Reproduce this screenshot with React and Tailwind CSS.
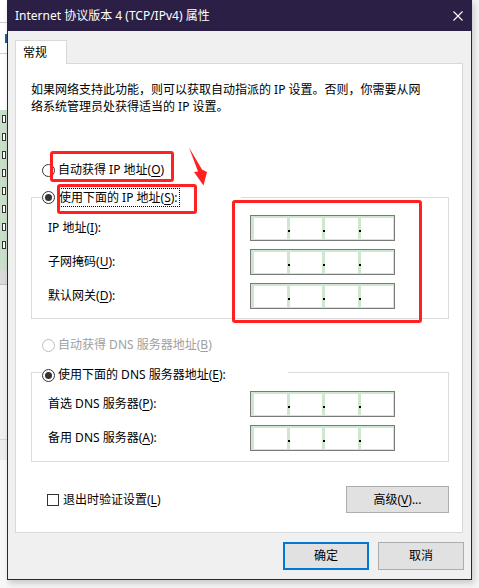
import React from "react";

const font = {
  fontFamily: '"Microsoft YaHei UI", "Noto Sans", "Noto Sans CJK SC", sans-serif',
};

function Radio({ checked, disabled }) {
  return (
    <span
      className={`w-[13px] h-[13px] rounded-full border bg-white flex items-center justify-center shrink-0 ${
        disabled ? "border-[#bcbcbc]" : "border-[#333333]"
      }`}
    >
      {checked && <span className="w-[7px] h-[7px] rounded-full bg-[#333333]" />}
    </span>
  );
}

function IpBox() {
  const cells = [0, 1, 2, 3];
  return (
    <div className="w-[145px] h-[26px] border border-[#7a7a7a] bg-[#cde8cf] flex pt-[2px] pb-[1px] pl-[3px] pr-[1px]">
      {cells.map((c) => (
        <React.Fragment key={c}>
          <div className="flex-1 bg-white" />
          {c < 3 && (
            <div className="w-[3px] relative">
              <span className="absolute left-[1px] top-[12px] w-[2px] h-[2px] bg-black" />
            </div>
          )}
        </React.Fragment>
      ))}
    </div>
  );
}

function FieldRow({ label, hotkey, after }) {
  return (
    <div className="flex items-center h-[26px]">
      <div className="w-[202px] text-[12px] text-black whitespace-nowrap">
        {label}
        (<u className="underline-offset-2">{hotkey}</u>){after || ":"}
      </div>
      <IpBox />
    </div>
  );
}

function LeftStrip() {
  const ticks = [0, 1, 2, 3, 4, 5, 6, 7];
  return (
    <div className="w-[7px] h-[588px] flex flex-col overflow-hidden">
      <div className="h-[22px] bg-white" />
      <div className="h-px bg-[#cfcfcf]" />
      <div className="h-[30px] bg-white flex flex-col justify-center items-end">
        <span className="w-[2px] h-[9px] bg-[#2c5d8c]" />
      </div>
      <div className="h-px bg-[#cfcfcf]" />
      <div className="h-[56px] bg-white" />
      <div className="h-[160px] bg-[#cadfca] flex flex-col pt-[5px] gap-[10px] items-end pr-[1px]">
        {ticks.map((t) => (
          <span key={t} className="w-[4px] h-[8px] border border-[#333] bg-white" />
        ))}
      </div>
      <div className="h-[15px] bg-[#dadada] border-b border-[#c0c0c0]" />
      <div className="h-[155px] bg-[#f0f0f0] border-b border-[#d6d6d6]" />
      <div className="h-[20px] bg-[#ececec]" />
      <div className="flex-1 bg-[#f7f7f7]" />
    </div>
  );
}

export default function App() {
  return (
    <div className="w-[479px] h-[588px] bg-[#f4f4f4] relative overflow-hidden" style={font}>
      <div className="flex">
        <LeftStrip />
        <div className="w-[465px] h-[580px] border-x border-b border-[#2c2343] flex flex-col bg-[#f0f0f0] shadow-[2px_3px_6px_rgba(0,0,0,0.18)]">
          {/* title bar */}
          <div className="h-[31px] bg-[#2c1f45] flex items-center justify-between pl-[8px] pr-[9px] -mx-px">
            <span className="text-white text-[12px] leading-none">
              Internet 协议版本 4 (TCP/IPv4) 属性
            </span>
            <svg width="10" height="10" viewBox="0 0 10 10">
              <path d="M0.5 0.5 L9.5 9.5 M9.5 0.5 L0.5 9.5" stroke="#ffffff" strokeWidth="1.1" />
            </svg>
          </div>

          {/* body */}
          <div className="flex flex-col pt-[9px] pl-[7px] pr-[8px]">
            <div className="w-[52px] h-[24px] bg-white border-x border-t border-[#d9d9d9] pl-[7px] flex items-center text-[12px] text-black relative z-10">
              常规
            </div>
            <div className="h-[470px] -mt-px bg-white border border-[#d9d9d9] pl-[15px] pr-[13px] pt-[17px] flex flex-col text-[12px] text-black">
              <p className="leading-[17px] whitespace-nowrap">
                如果网络支持此功能，则可以获取自动指派的 IP 设置。否则，你需要从网
                <br />
                络系统管理员处获得适当的 IP 设置。
              </p>

              <div className="mt-[45px] h-[20px] flex items-center pl-[11px] gap-[3px]">
                <Radio />
                <span>
                  自动获得 IP 地址(<u className="underline-offset-2">O</u>)
                </span>
              </div>

              {/* group 1 */}
              <div className="mt-[17px] border border-[#dcdcdc] pl-[16px] pb-[9px]">
                <div className="-mt-[11px] -ml-[6px] w-[199px] h-[20px] bg-white flex items-center gap-[2px]">
                  <Radio checked />
                  <span className="border border-dotted border-black px-[1px] leading-[17px]">
                    使用下面的 IP 地址(<u className="underline-offset-2">S</u>):
                  </span>
                </div>
                <div className="mt-[8px] flex flex-col gap-[8px]">
                  <FieldRow label="IP 地址" hotkey="I" />
                  <FieldRow label="子网掩码" hotkey="U" />
                  <FieldRow label="默认网关" hotkey="D" />
                </div>
              </div>

              <div className="mt-[16px] h-[20px] flex items-center pl-[11px] gap-[3px] text-[#a0a0a0]">
                <Radio disabled />
                <span>
                  自动获得 DNS 服务器地址(<u className="underline-offset-2">B</u>)
                </span>
              </div>

              {/* group 2 */}
              <div className="mt-[17px] border border-[#dcdcdc] pl-[16px] pb-[10px]">
                <div className="-mt-[8px] -ml-[6px] w-[246px] h-[20px] bg-white flex items-center gap-[3px]">
                  <Radio checked />
                  <span>
                    使用下面的 DNS 服务器地址(<u className="underline-offset-2">E</u>):
                  </span>
                </div>
                <div className="mt-[6px] flex flex-col gap-[8px]">
                  <FieldRow label="首选 DNS 服务器" hotkey="P" />
                  <FieldRow label="备用 DNS 服务器" hotkey="A" />
                </div>
              </div>

              <div className="mt-[24px] flex items-center justify-between">
                <div className="flex items-center gap-[4px] pl-[16px]">
                  <span className="w-[12px] h-[12px] border border-[#333333] bg-white" />
                  <span>
                    退出时验证设置(<u className="underline-offset-2">L</u>)
                  </span>
                </div>
                <button className="w-[103px] h-[27px] bg-[#e1e1e1] border border-[#adadad] text-[12px] text-black">
                  高级(<u className="underline-offset-2">V</u>)...
                </button>
              </div>
            </div>

            <div className="mt-[9px] flex justify-end gap-[9px]">
              <button className="w-[86px] h-[28px] bg-[#e1e1e1] border-2 border-[#0078d7] text-[12px] text-black">
                确定
              </button>
              <button className="w-[86px] h-[28px] bg-[#e1e1e1] border border-[#adadad] text-[12px] text-black -mr-px">
                取消
              </button>
            </div>
          </div>
        </div>
      </div>

      {/* red annotations */}
      <div className="absolute left-[50px] top-[151px] w-[124px] h-[31px] border-[3px] border-[#ff2121] rounded-[3px]" />
      <div className="absolute left-[57px] top-[184px] w-[140px] h-[30px] border-[3px] border-[#ff2121] rounded-[3px]" />
      <div className="absolute left-[232px] top-[200px] w-[190px] h-[123px] border-[3px] border-[#ff2121] rounded-[3px]" />
      <svg className="absolute left-0 top-0" width="479" height="588" viewBox="0 0 479 588">
        <polygon
          points="189,147.5 202,169.5 207,172 203.5,185.5 194,172 198,171.5"
          fill="#ff2121"
        />
      </svg>
    </div>
  );
}
